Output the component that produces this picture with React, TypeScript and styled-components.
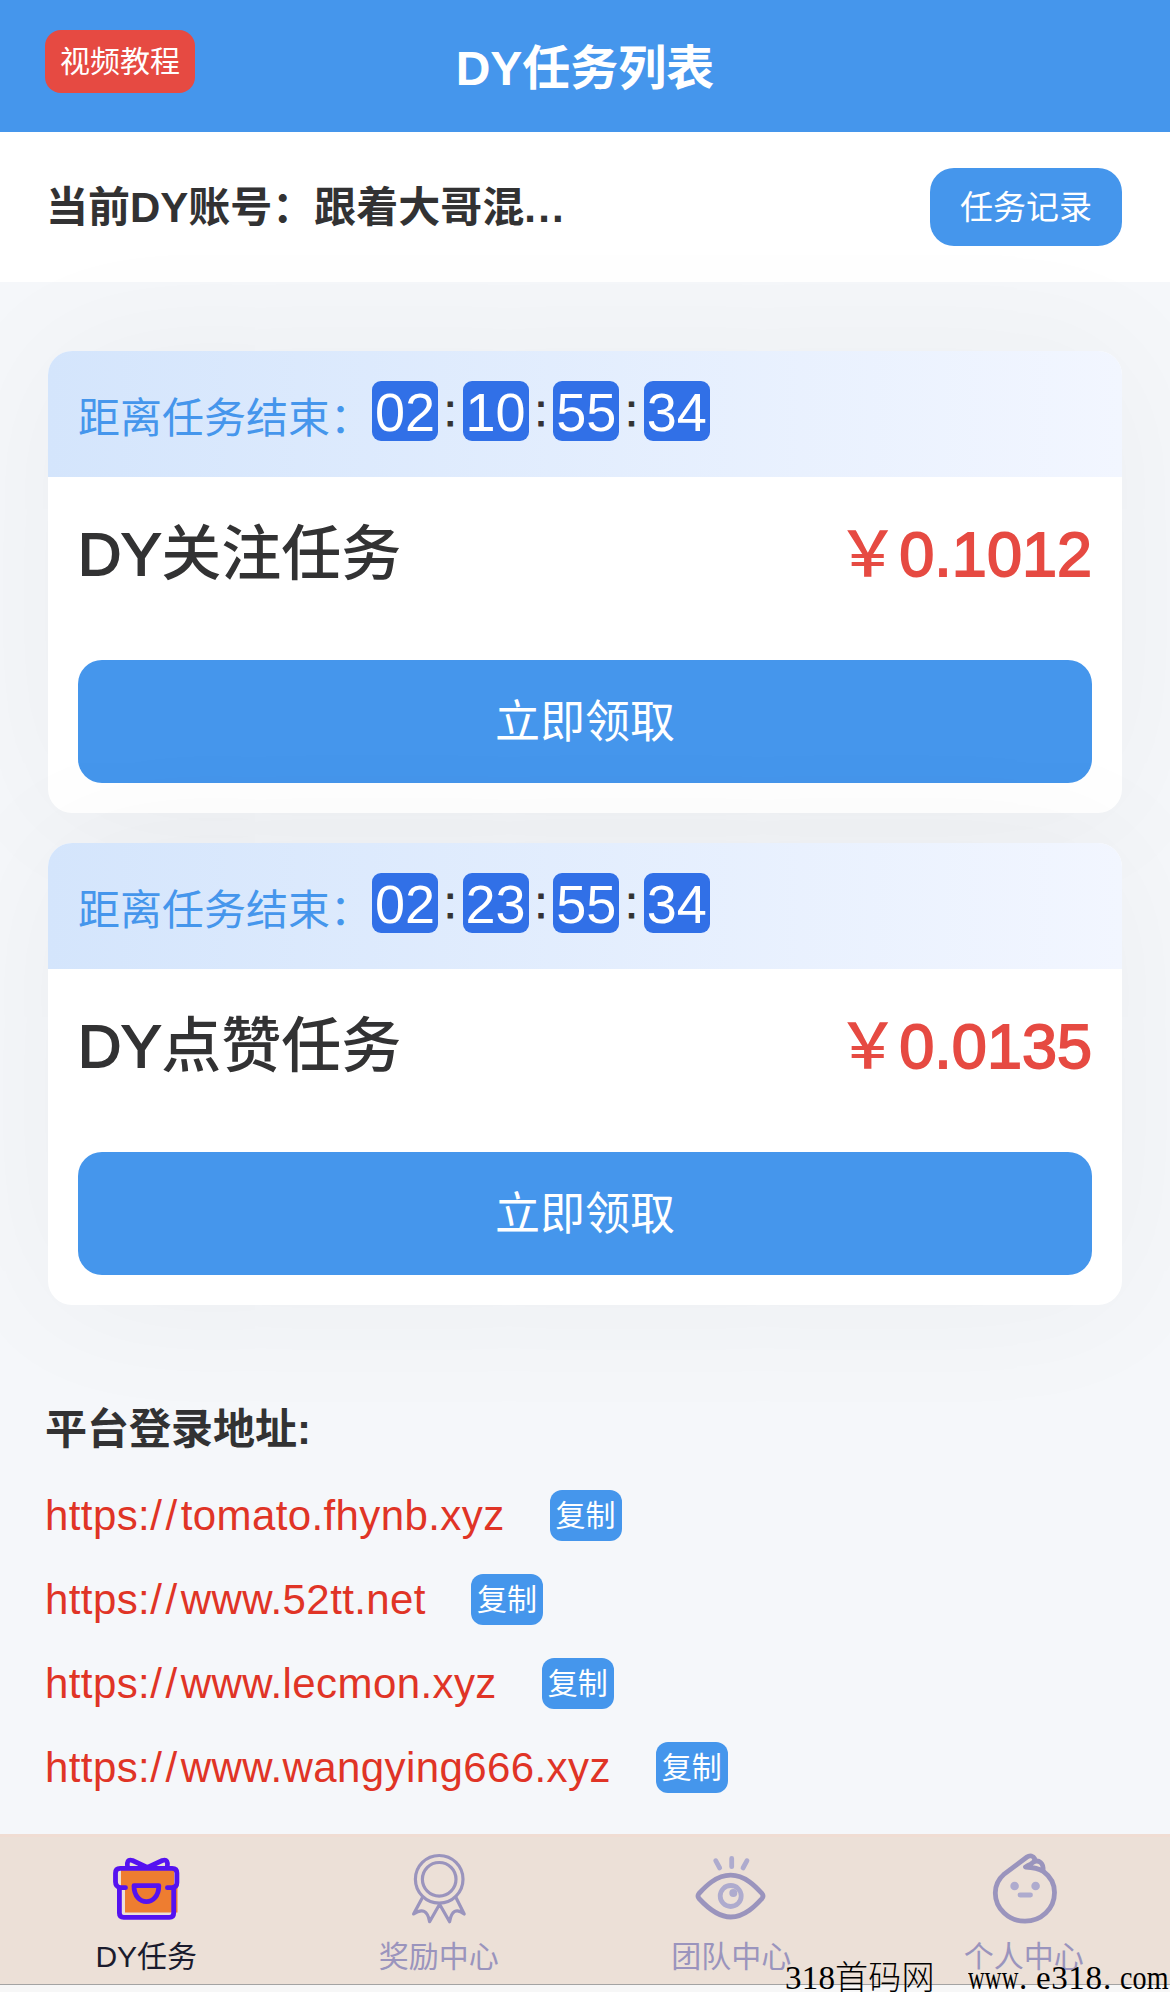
import React from 'react';
import styled, { createGlobalStyle } from 'styled-components';

const GlobalStyle = createGlobalStyle`
  * { box-sizing: border-box; }
  body {
    margin: 0;
    background: #f5f7fa;
    color: #323233;
    font-family: "Liberation Sans", "Noto Sans CJK SC", sans-serif;
    overflow: hidden;
  }
  button { font-family: inherit; border: 0; padding: 0; color: #fff; background: #4596ec; }
`;

const Page = styled.div`
  width: 1170px;
  height: 1992px;
  display: flex;
  flex-direction: column;
  overflow: hidden;
`;

const Header = styled.header`
  height: 132px;
  flex: none;
  display: grid;
  grid-template-columns: 1fr auto 1fr;
  align-items: center;
  padding: 0 45px;
  background: #4596ec;
  color: #fff;
`;

const TutorialButton = styled.button`
  width: 150px;
  height: 63px;
  margin-top: -9px;
  border-radius: 16px;
  background: #e64a42;
  font-size: 30px;
  line-height: 60px;
`;

const Title = styled.h1`
  margin: 0;
  padding-top: 5px;
  font-size: 48px;
  line-height: 66px;
  font-weight: 700;
`;

const AccountBar = styled.section`
  height: 150px;
  flex: none;
  display: flex;
  align-items: center;
  justify-content: space-between;
  padding: 0 48px 0 45px;
  background: #fff;
`;

const Account = styled.div`
  padding: 2px 0 0 1px;
  font-size: 42px;
  line-height: 60px;
  font-weight: 700;
`;

const Ellipsis = styled.span`
  letter-spacing: 2.2px;
`;

const RecordButton = styled.button`
  width: 192px;
  height: 78px;
  padding-top: 2px;
  border-radius: 24px;
  font-size: 33px;
  line-height: 76px;
`;

const TaskList = styled.section`
  display: flex;
  flex-direction: column;
  gap: 30px;
  margin: 69px 48px 0;
`;

const Card = styled.article`
  height: 462px;
  border-radius: 24px;
  overflow: hidden;
  background: #fff;
  box-shadow: 0 0 150px rgba(0, 0, 0, 0.045);
`;

const CardHead = styled.div`
  height: 126px;
  display: flex;
  align-items: flex-start;
  padding: 30px 30px 0;
  background: linear-gradient(90deg, #d4e5fc, #f2f6ff);
`;

const CountLabel = styled.span`
  width: 294px;
  padding-top: 8px;
  font-size: 42px;
  line-height: 60px;
  color: #4596ec;
  white-space: nowrap;
`;

const Clock = styled.div`
  display: flex;
  align-items: center;
`;

const Digits = styled.span`
  width: 66px;
  height: 60px;
  border-radius: 9px;
  background: #3170e7;
  color: #fff;
  font-size: 54px;
  line-height: 63px;
  text-align: center;
`;

const Colon = styled.span`
  width: 24.6px;
  font-size: 45px;
  line-height: 60px;
  text-align: center;
  -webkit-text-stroke: 1px currentColor;
`;

const CardBody = styled.div`
  height: 336px;
  display: flex;
  flex-direction: column;
  justify-content: space-between;
  padding: 33px 30px 30px;
`;

const TaskRow = styled.div`
  display: flex;
  justify-content: space-between;
  line-height: 90px;
`;

const TaskName = styled.h2`
  margin: 0;
  font-size: 60px;
  font-weight: 500;
`;

const Latin = styled.span`
  -webkit-text-stroke: 1.8px currentColor;
`;

const Price = styled.span`
  font-size: 63px;
  line-height: 88px;
  font-weight: 500;
  color: #e64a42;
`;

const ClaimButton = styled.button`
  height: 123px;
  padding-top: 3px;
  border-radius: 24px;
  font-size: 45px;
  line-height: 120px;
`;

const Addresses = styled.section`
  flex: 1;
  padding: 95px 45px 0;
`;

const AddressTitle = styled.h3`
  margin: 0 0 30px;
  font-size: 42px;
  line-height: 60px;
  font-weight: 700;
`;

const AddressRow = styled.div`
  height: 51px;
  margin-bottom: 33px;
  display: flex;
  align-items: center;
  gap: 45px;
  font-size: 42px;
  line-height: 51px;
  letter-spacing: 0.4px;
  color: #e03426;
`;

const Slashes = styled.span`
  letter-spacing: 3.6px;
`;

const CopyButton = styled.button`
  width: 72px;
  height: 51px;
  padding-top: 1px;
  border-radius: 12px;
  font-size: 30px;
  line-height: 50px;
`;

const TabBar = styled.nav`
  height: 151px;
  flex: none;
  display: grid;
  grid-template-columns: repeat(4, 1fr);
  background: #ece0d7;
  border-top: 3px solid #f0ddd3;
  border-bottom: 1px solid #a3a3a3;
`;

const Tab = styled.div<{ $active?: boolean }>`
  display: flex;
  flex-direction: column;
  align-items: center;
  padding-top: 8px;
  font-size: 30px;
  line-height: 42px;
  color: ${(p) => (p.$active ? '#1a1b2d' : '#9a94bd')};

  svg { width: 80px; height: 80px; margin-bottom: 11px; flex: none; }
`;

const Footer = styled.footer`
  position: relative;
  height: 7px;
  flex: none;
  background: #f7f7f7;
`;

const Watermark = styled.span`
  position: absolute;
  right: 0;
  bottom: -4px;
  display: flex;
  align-items: baseline;
  font-family: "Liberation Serif", "Noto Sans CJK SC", serif;
  font-size: 33px;
  line-height: 36px;
  color: #000;
  white-space: pre;
`;

const WatermarkRun = styled.span<{ $width: number; $scale?: number; $spacing?: number }>`
  display: inline-block;
  width: ${(p) => p.$width}px;
  letter-spacing: ${(p) => p.$spacing ?? 0.2}px;
  font-weight: 300;
  transform: scaleX(${(p) => p.$scale ?? 1});
  transform-origin: left;
`;

const GiftIcon = () => (
  <svg viewBox="0 0 80 80" fill="none">
    <path d="M15 24h53v17h3.500v26.500H19V43h-4z" fill="#ee7d30" />
    <g stroke="#5512f0" strokeWidth="4.800" strokeLinecap="round" strokeLinejoin="round">
      <path d="M19.500 42.700h-5q-5-1-5-6V28q0-4.700 4.700-4.700h52q4.700 0 4.700 4.700v9.500q0 5-5 5.200h-4.500" />
      <path d="M13.400 43v25q0 4.300 4.300 4.300h45.700q4.300 0 4.300-4.300V43" />
      <path d="M21.500 22c-.8-5 .4-8 5-6.500l14.900 7 14.900-7c4.600-1.500 5.800 1.500 5 6.500" />
      <path d="M28 40.700h24.800c0 21.300-24.800 21.300-24.800 0z" />
    </g>
  </svg>
);

const MedalIcon = () => (
  <svg viewBox="0 0 80 80" fill="none" stroke="#9a94bd" strokeWidth="3.200" strokeLinecap="round" strokeLinejoin="round">
    <circle cx="40.200" cy="34.300" r="23.800" />
    <circle cx="40.200" cy="34.300" r="16.800" />
    <path d="M23.200 53l-8.600 16q13-9 16 7.700l10-17.400 10 17.400q3-16.700 14.600-7.700l-8-16" />
  </svg>
);

const EyeIcon = () => (
  <svg viewBox="0 0 80 80" fill="none" stroke="#9a94bd" strokeWidth="4.800" strokeLinecap="round" strokeLinejoin="round">
    <path d="M8 48.500C14 42 25 30.200 39.700 30.200S65 42 71 48.500q2 2.500 0 5C65 60 54 72 39.700 72S14 60 8 53.500q-2-2.500 0-5z" />
    <g stroke="#aeabce">
      <circle cx="39.700" cy="51" r="10.500" />
      <path d="M24.700 15.700l4 7.300M40.700 13.500v8.200M56 15.700L52 23" />
    </g>
    <circle cx="42.300" cy="48" r="4" fill="#aeabce" stroke="none" />
  </svg>
);

const FaceIcon = () => (
  <svg viewBox="0 0 80 80" fill="none" stroke="#9a94bd" strokeWidth="4.800" strokeLinecap="round" strokeLinejoin="round">
    <path d="M41.500 22c6 .2 12.500.8 18 4.500C67 32 70.500 40 70.500 47.500 70.500 64 57 76.200 41 76.200S11.300 64 11.300 48c0-8 3.200-14 9.200-19.200L43 12c3-2.200 6.500-1 7.500 1.500 1.200 3.500-4 5.500-9 8.500z" />
    <path d="M50.500 16.500c4-1.500 9.500 1 8.500 9.500" />
    <circle cx="30.600" cy="41" r="4.300" fill="#aeabce" stroke="none" />
    <circle cx="51.600" cy="41" r="4.300" fill="#aeabce" stroke="none" />
    <path d="M36 50h10.500" stroke="#aeabce" />
  </svg>
);

type Task = { name: string; price: string; time: string[] };

const tasks: Task[] = [
  { name: '关注任务', price: '0.1012', time: ['02', '10', '55', '34'] },
  { name: '点赞任务', price: '0.0135', time: ['02', '23', '55', '34'] },
];

const hosts = ['tomato.fhynb.xyz', 'www.52tt.net', 'www.lecmon.xyz', 'www.wangying666.xyz'];

const tabs = [
  { label: 'DY任务', Icon: GiftIcon },
  { label: '奖励中心', Icon: MedalIcon },
  { label: '团队中心', Icon: EyeIcon },
  { label: '个人中心', Icon: FaceIcon },
];

const TaskCard = ({ name, price, time }: Task) => (
  <Card>
    <CardHead>
      <CountLabel>距离任务结束：</CountLabel>
      <Clock>
        {time.map((value, i) => (
          <React.Fragment key={i}>
            {i > 0 && <Colon>:</Colon>}
            <Digits>{value}</Digits>
          </React.Fragment>
        ))}
      </Clock>
    </CardHead>
    <CardBody>
      <TaskRow>
        <TaskName>
          <Latin>DY</Latin>
          {name}
        </TaskName>
        <Price>
          ￥<Latin>{price}</Latin>
        </Price>
      </TaskRow>
      <ClaimButton>立即领取</ClaimButton>
    </CardBody>
  </Card>
);

export default function App() {
  return (
    <Page>
      <GlobalStyle />
      <Header>
        <TutorialButton>视频教程</TutorialButton>
        <Title>DY任务列表</Title>
      </Header>
      <AccountBar>
        <Account>
          当前DY账号：跟着大哥混<Ellipsis>...</Ellipsis>
        </Account>
        <RecordButton>任务记录</RecordButton>
      </AccountBar>
      <TaskList>
        {tasks.map((task) => (
          <TaskCard key={task.name} {...task} />
        ))}
      </TaskList>
      <Addresses>
        <AddressTitle>平台登录地址:</AddressTitle>
        {hosts.map((host) => (
          <AddressRow key={host}>
            <span>
              https:<Slashes>//</Slashes>
              {host}
            </span>
            <CopyButton>复制</CopyButton>
          </AddressRow>
        ))}
      </Addresses>
      <TabBar>
        {tabs.map(({ label, Icon }, i) => (
          <Tab key={label} $active={i === 0}>
            <Icon />
            {label}
          </Tab>
        ))}
      </TabBar>
      <Footer>
        <Watermark>
          <WatermarkRun $width={50}>318</WatermarkRun>
          <WatermarkRun $width={133} $spacing={0.3}>首码网</WatermarkRun>
          <WatermarkRun $width={51} $scale={0.7}>www</WatermarkRun>
          <WatermarkRun $width={17}>.</WatermarkRun>
          <WatermarkRun $width={67} $spacing={0.6}>e318</WatermarkRun>
          <WatermarkRun $width={17}>.</WatermarkRun>
          <WatermarkRun $width={50} $scale={0.85}>com</WatermarkRun>
        </Watermark>
      </Footer>
    </Page>
  );
}
